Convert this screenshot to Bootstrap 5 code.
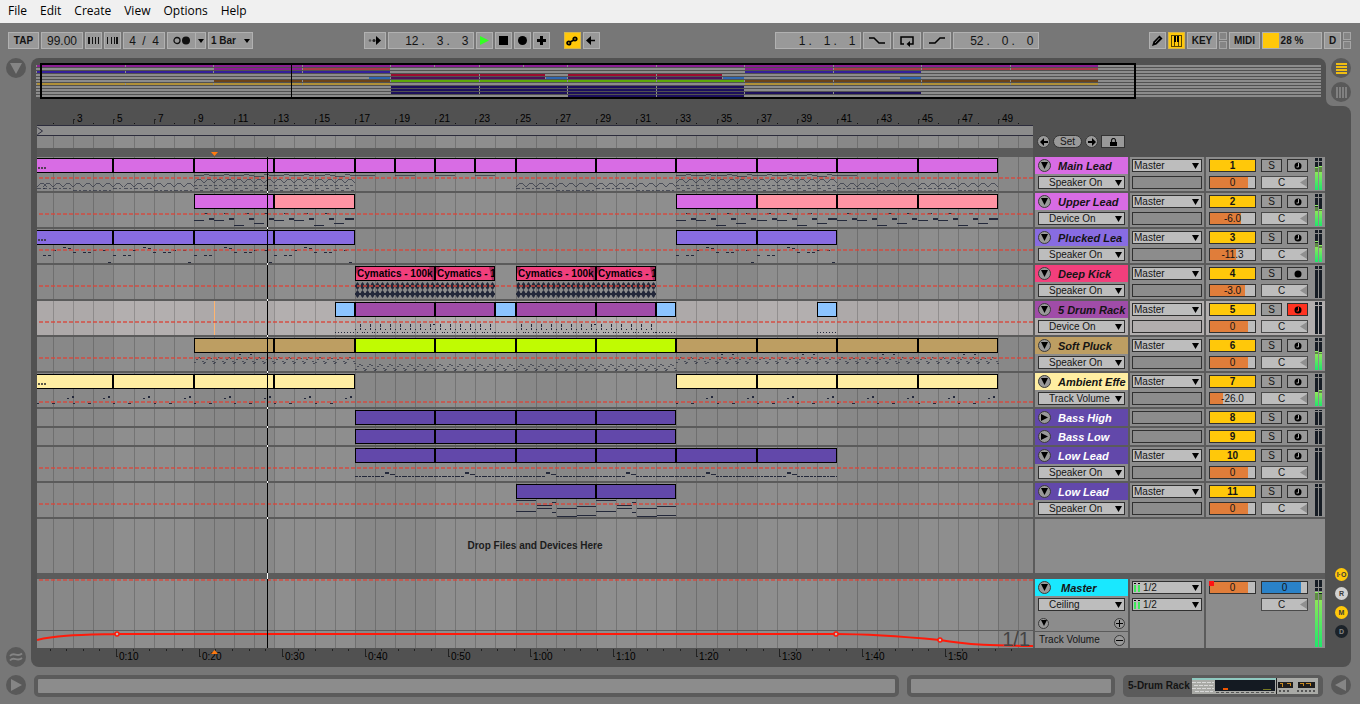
<!DOCTYPE html>
<html lang="en">
<head>
<meta charset="utf-8">
<meta name="viewport" content="width=device-width, initial-scale=1">
<title>Arrangement</title>
<link href="https://cdn.jsdelivr.net/npm/bootstrap@5.3.0/dist/css/bootstrap.min.css" rel="stylesheet">
<style>
:root{--bar:#777;--panel:#515151;--rule:#5b5b5b;--lane:#8c8c8c;--ink:#141414;--gold:#ffc80a}
body{background:var(--bar);color:var(--ink);font:10px/12px "Liberation Sans",Arial,sans-serif;overflow-x:hidden}
svg{display:block;flex:none}
button,input,select{font:inherit;color:inherit;padding:0;margin:0;border-radius:0}
.menus{background:#f0f0f0;height:23px;padding-left:8px;gap:13px;font:12px/22px "Open Sans","Noto Sans",sans-serif}
.menus a{color:#000;text-decoration:none}
.tools{height:35px;padding:9px 9px 0 8px}
.mid{gap:175px}
.ctl{height:17px;border:1px solid #b1b1b1;background:#999;display:flex;align-items:center;justify-content:center;font-weight:bold}
.ctl.on{background:var(--gold);border-color:#d8b84a}
.num{font-size:12px;font-weight:normal}
.num input{border:0;background:none;text-align:right;width:16px;height:15px}
.num input.one{width:7px}
.num span{width:9px;padding-left:3px}
.num .slash{width:16px;padding:0;text-align:center}
.w17{width:17px}.w22{width:22px}.w28{width:28px}.w31{width:31px}.w42{width:42px}.w86{width:86px}
.drop::after{content:"";border:3px solid transparent;border-top:4px solid #000;border-bottom:0}
.tiny i{display:block;width:8px;height:8px;border:1px solid #a5a5a5;background:#858585}
.tiny i+i{margin-top:1px}
.cpu{width:60px;background:linear-gradient(var(--gold) 0 0) 0 0/16px 100% no-repeat #999}
.rail-l{width:31px;padding:0 0 0 6px;flex:none}
.rail-r{width:34px;flex:none}
.notch{height:48px;background:var(--bar);border-bottom-left-radius:7px;padding-left:5px;gap:4px}
.rail-wrap{background:linear-gradient(90deg,var(--panel) 12px,var(--bar) 12px)}
.rail-low{width:25px;background:var(--panel);border-radius:0 8px 8px 0;padding:0 0 29px 9px;gap:6px}
.rnd{border:0;background:#595959;border-radius:50%;width:20px;height:20px;display:flex;align-items:center;justify-content:center;flex:none}
.dot{border:0;border-radius:50%;width:13px;height:13px;font:bold 7px/13px "Liberation Sans",sans-serif;text-align:center;color:#3a3a3a}
.main{flex:1 1 0;background:var(--panel);border-radius:8px 8px 0 8px;padding:5px 0 0 5px;min-width:0}
.overview{height:36px;margin-right:5px;overflow:hidden}
.board{margin-left:1px;margin-right:1px}
.lane{flex:1 1 0;min-width:0;overflow:hidden;position:relative;background:var(--lane)}
.side{width:290px;gap:2px;flex:none}
.locs{width:292px;padding:36px 0 0 4px;gap:3px;flex:none}
.tracks{background:linear-gradient(#fff 0 0) 230px 0/1px 100% no-repeat var(--rule)}
.trk{min-height:34px;gap:2px;margin-bottom:2px}
.trk.low{min-height:17px}
.trk.sel .lane,.trk.sel .cell{background:#b2aeae}
.cell{background:var(--lane)}
.head{width:93px}.io{width:74px;padding:2px 2px 0}.mix{width:119px;padding:2px 0 0 3px;position:relative}
.tname{height:17px;padding-left:3px;font:italic bold 11px/16px "Liberation Sans",Arial,sans-serif;white-space:nowrap}
.tname span{margin-left:7px}
.fold{width:13px;height:13px;border-radius:50%;border:1px solid #3a3a3a;background:#999;display:flex;align-items:center;justify-content:center;flex:none}
.fold.sm{width:11px;height:11px}
select.pick,.slot,.val,.sq{height:13px;border:1px solid #303030;background-color:#bdbdbd;line-height:11px;display:block;outline:0}
select.pick{appearance:none;width:100%;padding-left:1px;background-image:url("data:image/svg+xml,%3Csvg xmlns='http://www.w3.org/2000/svg' width='7' height='6'%3E%3Cpath d='M0 0h7L3.5 6z'/%3E%3C/svg%3E");background-repeat:no-repeat;background-position:right 2px center}
.head select.pick{width:87px;margin:2px 3px;padding-left:10px}
.slot{width:100%;background:none}
.mrow{gap:5px}
.val{width:47px;text-align:center}
.vol{background-image:linear-gradient(#e07d3a 0 0);background-size:var(--fill) 100%;background-repeat:no-repeat}
.cue{background-image:linear-gradient(#2a82c8 0 0);background-size:39px 100%;background-repeat:no-repeat}
.pan{border-color:#4a4a4a;padding-right:6px;background-image:url("data:image/svg+xml,%3Csvg xmlns='http://www.w3.org/2000/svg' width='7' height='9'%3E%3Cpath d='M7 0v9L0 4.5z' fill='%23909090'/%3E%3C/svg%3E");background-repeat:no-repeat;background-position:right 0 center}
.act{background:var(--gold);font-weight:bold}
.sq{width:21px;background:#999;display:flex;align-items:center;justify-content:center}
.sq.arm{background:#ff3220}
.meter{position:absolute;left:109px;top:1px}
.dropmsg{position:absolute;inset:0;display:flex;align-items:center;justify-content:center;font-weight:bold;color:#1c1c1c}
.zoomtxt{position:absolute;right:3px;bottom:0;font-size:20px;line-height:18px;color:#444}
.pill{border:1px solid #333;background:#999;border-radius:7px;height:13px;line-height:11px}
.foot{height:37px;padding:8px 9px 0 6px;gap:8px}
.box3{border:4px solid var(--rule);border-radius:5px;background:var(--lane);height:22px}
.clipbox{background:var(--rule);border-radius:5px;height:22px;width:200px;padding-left:5px;gap:2px;font-weight:bold}
</style>
</head>
<body>
<div class="d-flex flex-column min-vh-100">
<nav class="menus d-flex"><a href="#">File</a><a href="#">Edit</a><a href="#">Create</a><a href="#">View</a><a href="#">Options</a><a href="#">Help</a></nav>

<header class="tools d-flex justify-content-between">
  <div class="d-flex" style="gap:2px">
    <button class="ctl w31">TAP</button>
    <label class="ctl num w42"><input value="99.00" aria-label="Tempo" class="w-100 text-center"></label>
    <button class="ctl w17" aria-label="Nudge down"><svg width="13" height="9" shape-rendering="crispEdges"><path d="M1 1h2v7H1zM5 1h1v7H5zM8 1h1v7H8zM11 1h1v7h-1z" fill="#111"/></svg></button>
    <button class="ctl w17" aria-label="Nudge up"><svg width="13" height="9" shape-rendering="crispEdges"><path d="M1 1h1v7H1zM5 1h1v7H5zM8 1h1v7H8zM10 1h2v7h-2z" fill="#111"/></svg></button>
    <div class="ctl num w42"><input class="one" value="4" aria-label="Beats"><span class="slash">/</span><input class="one" value="4" aria-label="Beat unit"></div>
    <div class="d-flex"><button class="ctl" style="width:29px" aria-label="Metronome"><svg width="20" height="11"><circle cx="5" cy="5.5" r="3" fill="none" stroke="#111" stroke-width="1.3"/><circle cx="14" cy="5.5" r="4" fill="#111"/></svg></button><button class="ctl drop border-start-0" style="width:10px" aria-label="Metronome settings"></button></div>
    <button class="ctl drop" style="width:45px;gap:8px">1 Bar</button>
  </div>
  <div class="mid d-flex">
    <div class="d-flex" style="gap:2px">
      <button class="ctl w22" aria-label="Follow"><svg width="14" height="9"><circle cx="2" cy="4.5" r="1.3" fill="#555"/><circle cx="6" cy="4.5" r="1.5" fill="#222"/><path d="M8 0v9l5-4.5z"/></svg></button>
      <div class="ctl num w86 justify-content-end pe-1"><input value="12" aria-label="Bar"><span>.</span><input value="3" aria-label="Beat"><span>.</span><input value="3" aria-label="Sixteenth"></div>
      <button class="ctl w17" aria-label="Play"><svg width="11" height="11"><path d="M1 1l9 4.5L1 10z" fill="#3f2"/></svg></button>
      <button class="ctl w17" aria-label="Stop"><svg width="9" height="9"><path d="M0 0h9v9H0z"/></svg></button>
      <button class="ctl w17" aria-label="Record"><svg width="9" height="9"><circle cx="4.5" cy="4.5" r="4.5"/></svg></button>
      <button class="ctl w17 me-2" aria-label="Overdub"><svg width="9" height="9"><path d="M3 0h3v3h3v3H6v3H3V6H0V3h3z"/></svg></button>
      <button class="ctl w17 on ms-1" aria-label="Automation arm"><svg width="12" height="10" fill="none" stroke="#000" stroke-width="1.8"><circle cx="2.8" cy="7" r="1.7"/><circle cx="9" cy="3" r="1.7"/><path d="M4 6l4-2"/></svg></button>
      <button class="ctl w17" aria-label="Re-enable automation"><svg width="10" height="9"><path d="M0 4.5L5 0v9zM4 3.7h5v1.6H4z"/></svg></button>
    </div>
    <div class="d-flex" style="gap:2px">
      <div class="ctl num w86 justify-content-end pe-1"><input value="1" aria-label="Loop bar"><span>.</span><input value="1" aria-label="Loop beat"><span>.</span><input value="1" aria-label="Loop sixteenth"></div>
      <button class="ctl w28" aria-label="Punch in"><svg width="16" height="9" fill="none" stroke="#000" stroke-width="1.5"><path d="M0 2h5l5 5h6"/></svg></button>
      <button class="ctl w28" aria-label="Loop"><svg width="16" height="12" fill="none" stroke="#000" stroke-width="1.5"><path d="M5 9H2V2h12v7h-4"/><path d="M7.5 9L11 6v6z" fill="#000" stroke="none"/></svg></button>
      <button class="ctl w28" aria-label="Punch out"><svg width="16" height="9" fill="none" stroke="#000" stroke-width="1.5"><path d="M0 7h6l5-5h5"/></svg></button>
      <div class="ctl num w86 justify-content-end pe-1"><input value="52" aria-label="Length bars"><span>.</span><input value="0" aria-label="Length beats"><span>.</span><input value="0" aria-label="Length sixteenths"></div>
    </div>
  </div>
  <div class="d-flex" style="gap:2px">
    <button class="ctl w17" aria-label="Draw mode"><svg width="11" height="11"><path d="M0 11l1.5-4.5L7.500 .5l3 3-6 6z"/><path d="M3 8l4.500-5" stroke="#aaa" stroke-width=".8"/></svg></button>
    <button class="ctl w17 on" aria-label="Computer keyboard"><svg width="11" height="12" shape-rendering="crispEdges"><path d="M.5.5h10v11H.5zM3.500 6v6M7.500 6v6" fill="none" stroke="#5a4600"/><path d="M3 1h2v6H3zM6 1h2v6H6z"/></svg></button>
    <button class="ctl" style="width:30px">KEY</button>
    <div class="tiny"><i></i><i></i></div>
    <button class="ctl w31">MIDI</button>
    <div class="ctl cpu">28 %</div>
    <button class="ctl w17">D</button>
    <div class="tiny"><i></i><i></i></div>
  </div>
</header>

<main class="d-flex flex-grow-1">
  <div class="rail-l d-flex flex-column justify-content-between">
    <button class="rnd" aria-label="Show browser"><svg width="12" height="11"><path d="M0 0h12L6 11z" fill="#858585"/></svg></button>
    <button class="rnd" aria-label="Groove pool"><svg width="14" height="10" fill="none" stroke="#858585" stroke-width="1.8"><path d="M1 4C5-1 8 6 13 1.5M1 8.5C5 3.5 8 10.5 13 6"/></svg></button>
  </div>
  <div class="main d-flex flex-column">
    <div class="overview"><svg id="overview" width="2400" height="36" shape-rendering="crispEdges"></svg></div>
    <div class="board d-flex">
      <div class="lane bg-transparent"><svg id="ruler" width="100%" height="58"></svg></div>
      <div class="locs d-flex align-items-start">
        <button class="fold" aria-label="Previous locator"><svg width="8" height="8"><path d="M0 4l4-4v3h4v2H4v3z"/></svg></button>
        <button class="pill" style="width:29px">Set</button>
        <button class="fold" aria-label="Next locator"><svg width="8" height="8"><path d="M8 4L4 0v3H0v2h4v3z"/></svg></button>
        <button class="pill rounded-0 d-flex justify-content-center align-items-center" style="width:24px" aria-label="Lock envelopes"><svg width="8" height="8"><path d="M1 4h7v4H1z"/><path d="M2.500 4V2.500a2 2 0 0 1 4 0V4" fill="none" stroke="#111" stroke-width="1.200"/></svg></button>
      </div>
    </div>
    <div class="board tracks flex-grow-1 d-flex flex-column">
      <div id="tracks"></div>
      <div class="trk flex-grow-1 d-flex" style="margin-bottom:6px;min-height:54px">
        <div class="lane"><svg class="grid-only position-absolute" width="2400" height="900" shape-rendering="crispEdges"></svg><div class="dropmsg">Drop Files and Devices Here</div></div>
        <div class="cell side"></div>
      </div>
      <div class="trk d-flex mb-0" style="min-height:69px">
        <div class="lane"><svg id="master" width="2400" height="69"></svg><div class="zoomtxt">1/1</div></div>
        <div class="side d-flex">
          <div class="cell head">
            <div class="tname d-flex align-items-center" style="background:#19e8ff"><button class="fold" aria-label="Fold Master"><svg width="7" height="7"><path d="M0 0h7L3.500 7z"/></svg></button><span style="margin-left:10px">Master</span></div>
            <select class="pick" aria-label="Master parameter"><option>Ceiling</option></select>
            <div class="d-flex justify-content-between align-items-center" style="height:19px;padding:2px 3px 0;border-bottom:1px solid #5b5b5b">
              <button class="fold sm" aria-label="Expand lanes"><svg width="6" height="6"><path d="M0 0h6L3 6z"/></svg></button>
              <button class="fold sm" aria-label="Add lane"><svg width="7" height="7"><path d="M3 0h1v7H3zM0 3h7v1H0z"/></svg></button>
            </div>
            <div class="d-flex justify-content-between align-items-center" style="height:16px;padding:0 3px 0 4px"><span>Track Volume</span>
              <button class="fold sm" aria-label="Remove lane"><svg width="7" height="7"><path d="M0 3h7v1H0z"/></svg></button></div>
          </div>
          <div class="cell io d-flex flex-column" style="gap:4px">
            <div class="position-relative"><select class="pick" style="padding-left:10px" aria-label="Cue out"><option>1/2</option></select><svg class="position-absolute" style="left:2px;top:2px" width="6" height="9"><path d="M0 0h2v1H0zM4 0h2v1H4z"/><path d="M0 2h2v7H0zM4 2h2v7H4z" fill="#3fe85a"/></svg></div>
            <div class="position-relative"><select class="pick" style="padding-left:10px" aria-label="Master out"><option>1/2</option></select><svg class="position-absolute" style="left:2px;top:2px" width="6" height="9"><path d="M0 0h2v1H0zM4 0h2v1H4z"/><path d="M0 2h2v7H0zM4 2h2v7H4z" fill="#3fe85a"/></svg></div>
          </div>
          <div class="cell mix">
            <div class="mrow d-flex position-relative"><input class="val vol" style="--fill:38px" value="0" aria-label="Master volume"><svg class="position-absolute" width="5" height="5"><path d="M0 0h5v5H0z" fill="#f11"/></svg><input class="val cue" value="0" aria-label="Cue volume"></div>
            <div class="mrow d-flex mt-1" style="padding-left:52px"><input class="val pan" value="C" aria-label="Master pan"></div>
            <svg class="meter" id="mmeter" width="8" height="67" shape-rendering="crispEdges"></svg>
          </div>
        </div>
      </div>
    </div>
    <svg id="clock" width="100%" height="19"></svg>
  </div>
  <div class="rail-r d-flex flex-column">
    <div class="rail-wrap"><div class="notch d-flex flex-column">
      <button class="rnd" aria-label="Arrangement view"><svg width="11" height="11" shape-rendering="crispEdges"><path d="M0 0h11v2H0zM0 3h11v2H0zM0 6h11v2H0zM0 9h11v2H0z" fill="#ffc80a" opacity=".9"/></svg></button>
      <button class="rnd" aria-label="Session view"><svg width="11" height="11" shape-rendering="crispEdges"><path d="M0 0h2v11H0zM3 0h2v11H3zM6 0h2v11H6zM9 0h2v11H9z" fill="#808080"/></svg></button>
    </div></div>
    <div class="rail-low flex-grow-1 d-flex flex-column justify-content-end">
      <button class="dot" style="background:var(--gold)">I·O</button>
      <button class="dot" style="background:#d2d2d2">R</button>
      <button class="dot" style="background:var(--gold)">M</button>
      <button class="dot" style="background:#1b2229;color:#888">D</button>
    </div>
  </div>
</main>

<footer class="foot d-flex">
  <button class="rnd" aria-label="Show info"><svg width="12" height="12"><path d="M1 0l11 6L1 12z" fill="#858585"/></svg></button>
  <div class="box3 flex-grow-1"></div>
  <div class="box3" style="width:208px"></div>
  <div class="clipbox d-flex align-items-center"><span class="text-nowrap">5-Drum Rack</span>
    <svg width="126" height="16" shape-rendering="crispEdges"><path d="M0 0h126v16H0z" fill="#a9aaa6"/><path d="M0 0h84v2H0z" fill="#8fc9c0"/><path d="M0 4h22M2 7h20M0 10h22M3 13h18" stroke="#d8d8d8" stroke-dasharray="4 1"/><path d="M23 2h60v11H23z" fill="#141a22"/><path d="M84 0h1v16h-1z" fill="#222"/><path d="M24 14h60" stroke="#555" stroke-dasharray="3 2"/><path d="M31 10h5v2h-5z" fill="#e50"/><path d="M71 11h8v1h-8z" fill="#777a22"/><path d="M86 4h15v6H86zM106 4h17v6h-17z" fill="#1e1e1e"/><path d="M88 5h2v4M95 5h3v3M108 5h3v3M114 5h4v3" stroke="#c98a20" fill="none"/><path d="M87 13h12M105 13h18" stroke="#555" stroke-width="2" stroke-dasharray="2 2"/></svg></div>
  <button class="rnd" aria-label="Show device view"><svg width="12" height="12"><path d="M11 0L0 6l11 6z" fill="#858585"/></svg></button>
</footer>
</div>

<script src="https://cdn.jsdelivr.net/npm/bootstrap@5.3.0/dist/js/bootstrap.bundle.min.js"></script>
<script>
const BARPX = 20.104, LAST = 118;
// x of a bar line inside a lane
const X = b => Math.max(Math.floor(33.55 + BARPX * (b - 1)) - 37, 0);
const r = (x, y, w, h, f) => `<rect x="${x}" y="${y}" width="${w}" height="${h}" fill="${f}"/>`;
const PLAY = 230;

function grid(h) {
  let s = '';
  for (let b = 5; b < LAST; b += 8) s += r(X(b), 0, X(b + 4) - X(b), h, '#fff" fill-opacity=".025');
  for (let b = 1; b < LAST; b += 8) s += r(X(b), 0, X(b + 4) - X(b), h, '#000" fill-opacity=".025');
  for (let b = 2; b < LAST; b++) s += r(X(b), 0, 1, h, '#000" fill-opacity=".18');
  return s;
}
const dash = y => `<path d="M2 ${y}H2400" stroke="#d8453a" stroke-opacity=".68" stroke-width="2" stroke-dasharray="4 2"/>`;

const INK = '#23283a';
const note = (x, y, w, h = 1) => r(x, y, w, h, INK);
const soft = (x, y, w, h = 1) => r(x, y, w, h, '#23283a" fill-opacity=".62');
const span = (a, b, step, fn) => { let s = ''; for (let k = a; k < b; k += step) s += fn(X(k), k); return s; };
const arch = (x, y) => [3, 2, 1, 0, 0, 0, 0, 1, 2, 3].map((d, i) => soft(x + i, y + d, 1)).join('');
const dots = (x, y) => [[0, 5], [2, 2], [4, 0], [6, 1], [8, 4], [9, 6]].map(p => soft(x + p[0], y + p[1], 2, 1)).join('');

const art = {
  lead() {
    const low = (a, b) => span(a, b, .5, (x, k) => arch(x, 26) + soft(x, (Math.floor((k - 1) / 2) % 2) ? 33 : 31, 4) + soft(x + 6, (Math.floor((k - 1) / 2) % 2) ? 33 : 31, 2));
    const high = (a, b) => span(a, b, .5, (x, k) => arch(x, 22) + soft(x, 28, 3) + soft(x + 5, 28, 3) + soft(x + 1, 31, 3) + soft(x + 6, 33, 3))
      + span(a, b, 1, (x, k) => soft(x, (k - a) % 4 > 2 ? 19 : 18, 10) + soft(x + 10, 17, 5) + soft(x + 15, 18, 5));
    return low(1, 9) + high(9, 17) + span(17, 25, 2, x => soft(x, 18, 20)) + low(25, 33) + high(33, 41) + soft(X(41), 18, 20) + low(41, 49);
  },
  upper() {
    return [9, 13, 33, 37, 41, 45].map((b, i) => { const x = X(b), e = i % 2;
      return note(x, 27, 10) + note(x + 15, 25, 5, 2) + note(x + 20, 27, 10) + note(x + 35, 25, 5, 2) + note(x + 40, 32, 10) + note(x + 55, 25, 5, 2) + note(x + 60, 30, 10) + note(x + (e ? 71 : 75), 25, e ? 9 : 5, 2)
        + note(x + 10, 20, 4) + note(x + 30, 20, 4) + note(x + 51, 20, 4) + (e ? '' : note(x + 70, 20, 4)); }).join('');
  },
  pluck() {
    return [1, 5, 9, 13, 33, 37].map(b => { const x = b == 1 ? -4 : X(b);
      return [[0, 26], [10, 26], [15, 26], [20, 21], [30, 18], [35, 19], [40, 23], [50, 23], [55, 23], [60, 21], [70, 21], [75, 33]].map(p => note(x + p[0], p[1], 3)).join(''); }).join('');
  },
  kick() {
    return [[17, 24], [25, 32]].map(([a, b]) => { let p = '';
      for (const c of [21, 29]) for (let x = X(a); x < X(b) - 3; x += 5) p += `M${x + 1} ${c - 2}l1.500-2 1.500 2 .5 2-.5 2-1.500 2-1.500-2-.5-2z`;
      return `<path d="${p}" fill="${INK}" shape-rendering="auto"/>` + note(X(a), 20, X(b) - X(a), 2) + note(X(a), 28, X(b) - X(a), 2); }).join('');
  },
  drum() {
    const hits = (a, b) => { let s = ''; for (let x = X(a); x < X(b) - 3; x += 10) s += note(x, 28, 1) + note(x + 5, 23, 1, 3) + note(x + 5, 27, 1, 2) + note(x + 2, 31, 1) + note(x + 7, 31, 1) + note(x + 9, 31, 1); return s; };
    const hats = b => { let s = ''; for (let x = X(b); x < X(b + 1); x += 3) s += note(x, 31, 1); return s; };
    return hats(16) + hits(17, 24) + hats(24) + hits(25, 32) + hats(32) + hats(40) + note(X(21) - 2, 23, 2) + note(X(29) - 2, 23, 2) + r(177, 0, 1, 34, '#ffb46e');
  },
  soft() { return span(9, 17, .5, x => dots(x, 20)) + span(17, 33, .5, x => dots(x, 27)) + span(33, 49, .5, x => dots(x, 20)) + [9, 33, 37, 41, 45].map(b => note(X(b) + 45, 17, 2) + note(X(b) + 56, 17, 2)).join(''); },
  amb() {
    const f = x => note(x, 30, 2) + note(x + 15, 30, 3) + note(x + 30, 25, 2) + note(x + 35, 23, 2, 2);
    return span(1, 17, 2, f) + span(33, 49, 2, f);
  },
  low() { return span(17, 41, 4, x => `<path d="M${x} 29.500h30M${x + 40} 29.500h40" stroke="${INK}" stroke-dasharray="3 1 2 1 5 1"/>` + note(x + 30, 25, 4, 2) + note(x + 35, 27, 5)); },
  low2() {
    return [25, 29].map(b => { const x = X(b); return [[0, 17, 20], [0, 28, 20], [21, 22, 15], [21, 25, 15], [36, 19, 4], [36, 29, 4], [41, 25, 20], [41, 33, 20], [61, 23, 19], [61, 32, 19]].map(p => note(x + p[0], p[1], p[2])).join(''); }).join('');
  }
};

const M = '#d86ce4', P = '#ff94a4', V = '#886ce2', K = '#f23f7c', D = '#a04ca8', B = '#8cc4ff', T = '#bd9e62', G = '#c0fb02', A = '#ffeea2', L = '#6248aa';
const tracks = [
  {n: 'Main Lead', c: M, p: 'Speaker On', v: '0', f: 38, art: 'lead', m: [[9, 10, 14], [8, 9, 14]], ell: 1, clips: [[1, 5, M], [5, 9, M], [9, 13, M], [13, 17, M], [17, 19, M], [19, 21, M], [21, 23, M], [23, 25, M], [25, 29, M], [29, 33, M], [33, 37, M], [37, 41, M], [41, 45, M], [45, 49, M]]},
  {n: 'Upper Lead', c: M, p: 'Device On', v: '-6.0', f: 31, art: 'upper', m: [[11, 13, 17], [15, 16, 17]], clips: [[9, 13, M], [13, 17, P], [33, 37, M], [37, 41, P], [41, 45, P], [45, 49, P]]},
  {n: 'Plucked Lea', c: V, p: 'Speaker On', v: '-11.3', f: 26, art: 'pluck', m: [[11, 13, 17], [15, 16, 18]], ell: 1, clips: [[1, 5, V], [5, 9, V], [9, 13, V], [13, 17, V], [33, 37, V], [37, 41, V]]},
  {n: 'Deep Kick', c: K, p: 'Speaker On', v: '-3.0', f: 35, art: 'kick', audio: 1, clips: [[17, 21, K, 'Cymatics - 100k'], [21, 24, K, 'Cymatics - 1'], [25, 29, K, 'Cymatics - 100k'], [29, 32, K, 'Cymatics - 1']]},
  {n: '5 Drum Rack', c: D, p: 'Device On', v: '0', f: 38, art: 'drum', sel: 1, clips: [[16, 17, B], [17, 21, D], [21, 24, D], [24, 25, B], [25, 29, D], [29, 32, D], [32, 33, B], [40, 41, B]]},
  {n: 'Soft Pluck', c: T, p: 'Speaker On', v: '0', f: 38, art: 'soft', m: [[13, 14, 16], [14, 15, 16]], clips: [[9, 13, T], [13, 17, T], [17, 21, G], [21, 25, G], [25, 29, G], [29, 33, G], [33, 37, T], [37, 41, T], [41, 45, T], [45, 49, T]]},
  {n: 'Ambient Effe', c: A, p: 'Track Volume', v: '-26.0', f: 13, art: 'amb', dy: 29, m: [[18, 19, 19], [16, 17, 19]], ell: 1, clips: [[1, 5, A], [5, 9, A], [9, 13, A], [13, 17, A], [33, 37, A], [37, 41, A], [41, 45, A], [45, 49, A]]},
  {n: 'Bass High', c: L, w: 1, small: 1, clips: [[17, 21, L], [21, 25, L], [25, 29, L], [29, 33, L]]},
  {n: 'Bass Low', c: L, w: 1, small: 1, clips: [[17, 21, L], [21, 25, L], [25, 29, L], [29, 33, L]]},
  {n: 'Low Lead', c: L, w: 1, p: 'Speaker On', v: '0', f: 38, art: 'low', clips: [[17, 21, L], [21, 25, L], [25, 29, L], [29, 33, L], [33, 37, L], [37, 41, L]]},
  {n: 'Low Lead', c: L, w: 1, p: 'Speaker On', v: '0', f: 38, art: 'low2', clips: [[25, 29, L], [29, 33, L]]}
];

function meter(h, m, gap = 3) {
  let s = '';
  for (const i of [0, 1]) {
    const x = i * 4;
    s += r(x, 0, 3, gap, '#161c24') + r(x, gap + 1, 3, h - gap - 1, '#161c24');
    if (m) { const [pk, sh, so] = m[i];
      s += r(x, sh, 3, so - sh, '#5c8a42') + r(x, so, 3, h - so, 'url(#lvl)') + r(x, pk, 3, 1, '#8df060'); }
  }
  return `<defs><linearGradient id="lvl" x1="0" y1="0" x2="0" y2="1"><stop offset="0" stop-color="#8ce65a"/><stop offset="1" stop-color="#1fe86a"/></linearGradient></defs>` + s;
}

document.getElementById('tracks').innerHTML = tracks.map((t, i) => {
  const h = t.small ? 17 : 34;
  let s = grid(h);
  if (t.art) s += art[t.art]() + dash(t.dy || 21);
  for (const [a, b, c, txt] of t.clips) {
    const x0 = a == 1 ? -2 : X(a), x1 = X(b);
    s += r(x0, 1, x1 - x0, 15, '#000') + r(x0 + 1, 2, x1 - x0 - 2, 13, c);
    if (txt) s += `<svg x="${x0}" width="${x1 - x0 - 1}" height="16"><path d="M1 2h4L1 9zM${x1 - x0 - 6} 2h5v13h-2z" fill="#a82a5a" shape-rendering="auto"/><text x="2" y="12" font-weight="bold">${txt}</text></svg>`;
  }
  if (t.ell) s += r(1, 10, 2, 2, '#333" fill-opacity=".8') + r(4, 10, 2, 2, '#333" fill-opacity=".8') + r(7, 10, 2, 2, '#333" fill-opacity=".8');
  s += r(PLAY, 0, 1, h, '#000');
  const fold = t.small ? 'M0 0v7l7-3.500z' : 'M0 0h7L3.500 7z';
  const rec = t.audio ? '<circle cx="4" cy="4" r="3.500"/>' : `<circle cx="4" cy="4" r="3.500"/><path d="M4.500 1v4h-2" fill="none" stroke="${t.sel ? '#ff3220' : '#aaa'}"/>`;
  return `<div class="trk d-flex ${t.small ? 'low' : ''} ${t.sel ? 'sel' : ''}">
  <div class="lane"><svg width="2400" height="${h}" shape-rendering="crispEdges">${s}</svg></div>
  <div class="side d-flex">
   <div class="cell head"><div class="tname d-flex align-items-center ${t.w ? 'text-white' : ''}" style="background:${t.c}"><button class="fold" aria-label="Fold ${t.n}"><svg width="7" height="7" fill="#000"><path d="${fold}"/></svg></button><span>${t.n}</span></div>
   ${t.p ? `<select class="pick" aria-label="${t.n} parameter"><option>${t.p}</option></select>` : ''}</div>
   <div class="cell io">${t.small ? '<div class="slot"></div>' : `<select class="pick" aria-label="${t.n} output"><option>Master</option></select><div class="slot mt-1"></div>`}</div>
   <div class="cell mix"><div class="mrow d-flex"><button class="val act">${i + 1}</button><button class="sq">S</button><button class="sq ${t.sel ? 'arm' : ''}" aria-label="Arm ${t.n}"><svg width="8" height="8">${rec}</svg></button></div>
   ${t.p ? `<div class="mrow d-flex mt-1"><input class="val vol" style="--fill:${t.f}px" value="${t.v}" aria-label="${t.n} volume"><input class="val pan" value="C" aria-label="${t.n} pan"></div>` : ''}
   <svg class="meter" width="8" height="${t.small ? 15 : 32}" shape-rendering="crispEdges">${meter(t.small ? 15 : 32, t.m, t.small ? 1 : 3)}</svg></div>
  </div></div>`;
}).join('');

document.querySelector('.grid-only').innerHTML = grid(900) + r(PLAY, 0, 1, 900, '#000');
document.getElementById('mmeter').innerHTML = meter(67, [[12, 13, 20], [12, 14, 20]], 7) + r(0, 11, 8, 1, '#8c8c8c');
document.getElementById('master').innerHTML = `<g shape-rendering="crispEdges">${grid(69)}${dash(1)}${r(0, 51, 2400, 1, '#5b5b5b')}</g>`
  + '<path d="M0 61C20 56 45 56 80 55H799C830 55 860 57 903 61C930 66 960 66.500 996 67H2400" fill="none" stroke="#ff1a0a" stroke-width="2"/>'
  + [[80, 55], [799, 55], [903, 61]].map(p => `<circle cx="${p[0]}" cy="${p[1]}" r="2" fill="#bbb" stroke="#ff1a0a" stroke-width="1.500"/>`).join('')
  + `<rect x="${PLAY}" width="1" height="69"/>`;

// both rulers are drawn for the visible width of the lanes
function rulers() {
  const w = document.querySelector('#tracks .lane').clientWidth;
  let s = r(0, 26, w, 32, '#5b5b5b') + r(0, 26, w, 1, '#2c2c3c') + r(0, 27, w, 9, '#8c8c8c') + r(0, 36, w, 1, '#2c2c3c') + r(0, 37, w, 12, '#8c8c8c') + `<svg y="37" width="${w}" height="12">${grid(12)}</svg>`;
  for (let b = 2; X(b) < w; b++) {
    if (b % 2 == 0) s += r(X(b), 24, 1, 1, '#111');
    else if (X(b) + 18 < w) s += r(X(b), 20, 1, 5, '#222') + r(X(b), 20, 2, 1, '#222') + `<text x="${X(b) + 4}" y="23">${b}</text>`;
  }
  document.getElementById('ruler').innerHTML = `<g shape-rendering="crispEdges">${s}</g><path d="M.5 28.500l5 3.500-5 3.500" fill="none" stroke="#2c2c3c"/><path d="M174 53h7l-3.500 4z" fill="#ff7a10"/>`;

  s = '';
  for (let t = 2, x = 0; (x = Math.floor(80.500 + 8.290 * (t - 10))) < w; t += 2) {
    if (t % 10) s += r(x, 1, 1, 2, '#222');
    else if (x + 24 < w) s += r(x, 1, 1, 7, '#222') + r(x, 8, 2, 1, '#222') + `<text x="${x + 3}" y="12">${Math.floor(t / 60)}:${String(t % 60).padStart(2, '0')}</text>`;
  }
  document.getElementById('clock').innerHTML = s + '<path d="M175 6h7l-3.500-4z" fill="#ff7a10"/>';
}
rulers();
addEventListener('resize', rulers);

// overview: one strip per track, 22.13px per bar
const O = b => Math.round(1 + 22.130 * (b - 1));
const dark = {[M]: '#8a1e92', [P]: '#a83a48', [V]: '#34209a', [K]: '#9a0c2e', [D]: '#4c1058', [B]: '#2f66b0', [T]: '#6a4218', [G]: '#5ca808', [A]: '#b09038', [L]: '#1c0f5c'};
let o = '';
tracks.forEach((t, i) => {
  const y = 2 + i * 3;
  o += r(0, y, 2400, 2, '#8c8c8c') + t.clips.map(c => r(O(c[0]), y, O(c[1]) - O(c[0]) - 1, 2, dark[c[2]])).join('');
});
document.getElementById('overview').innerHTML = o + `<rect x="5" y="1" width="1094" height="34" fill="none" stroke="#000" stroke-width="2"/>` + r(255, 1, 1, 34, '#000');
</script>
</body>
</html>
